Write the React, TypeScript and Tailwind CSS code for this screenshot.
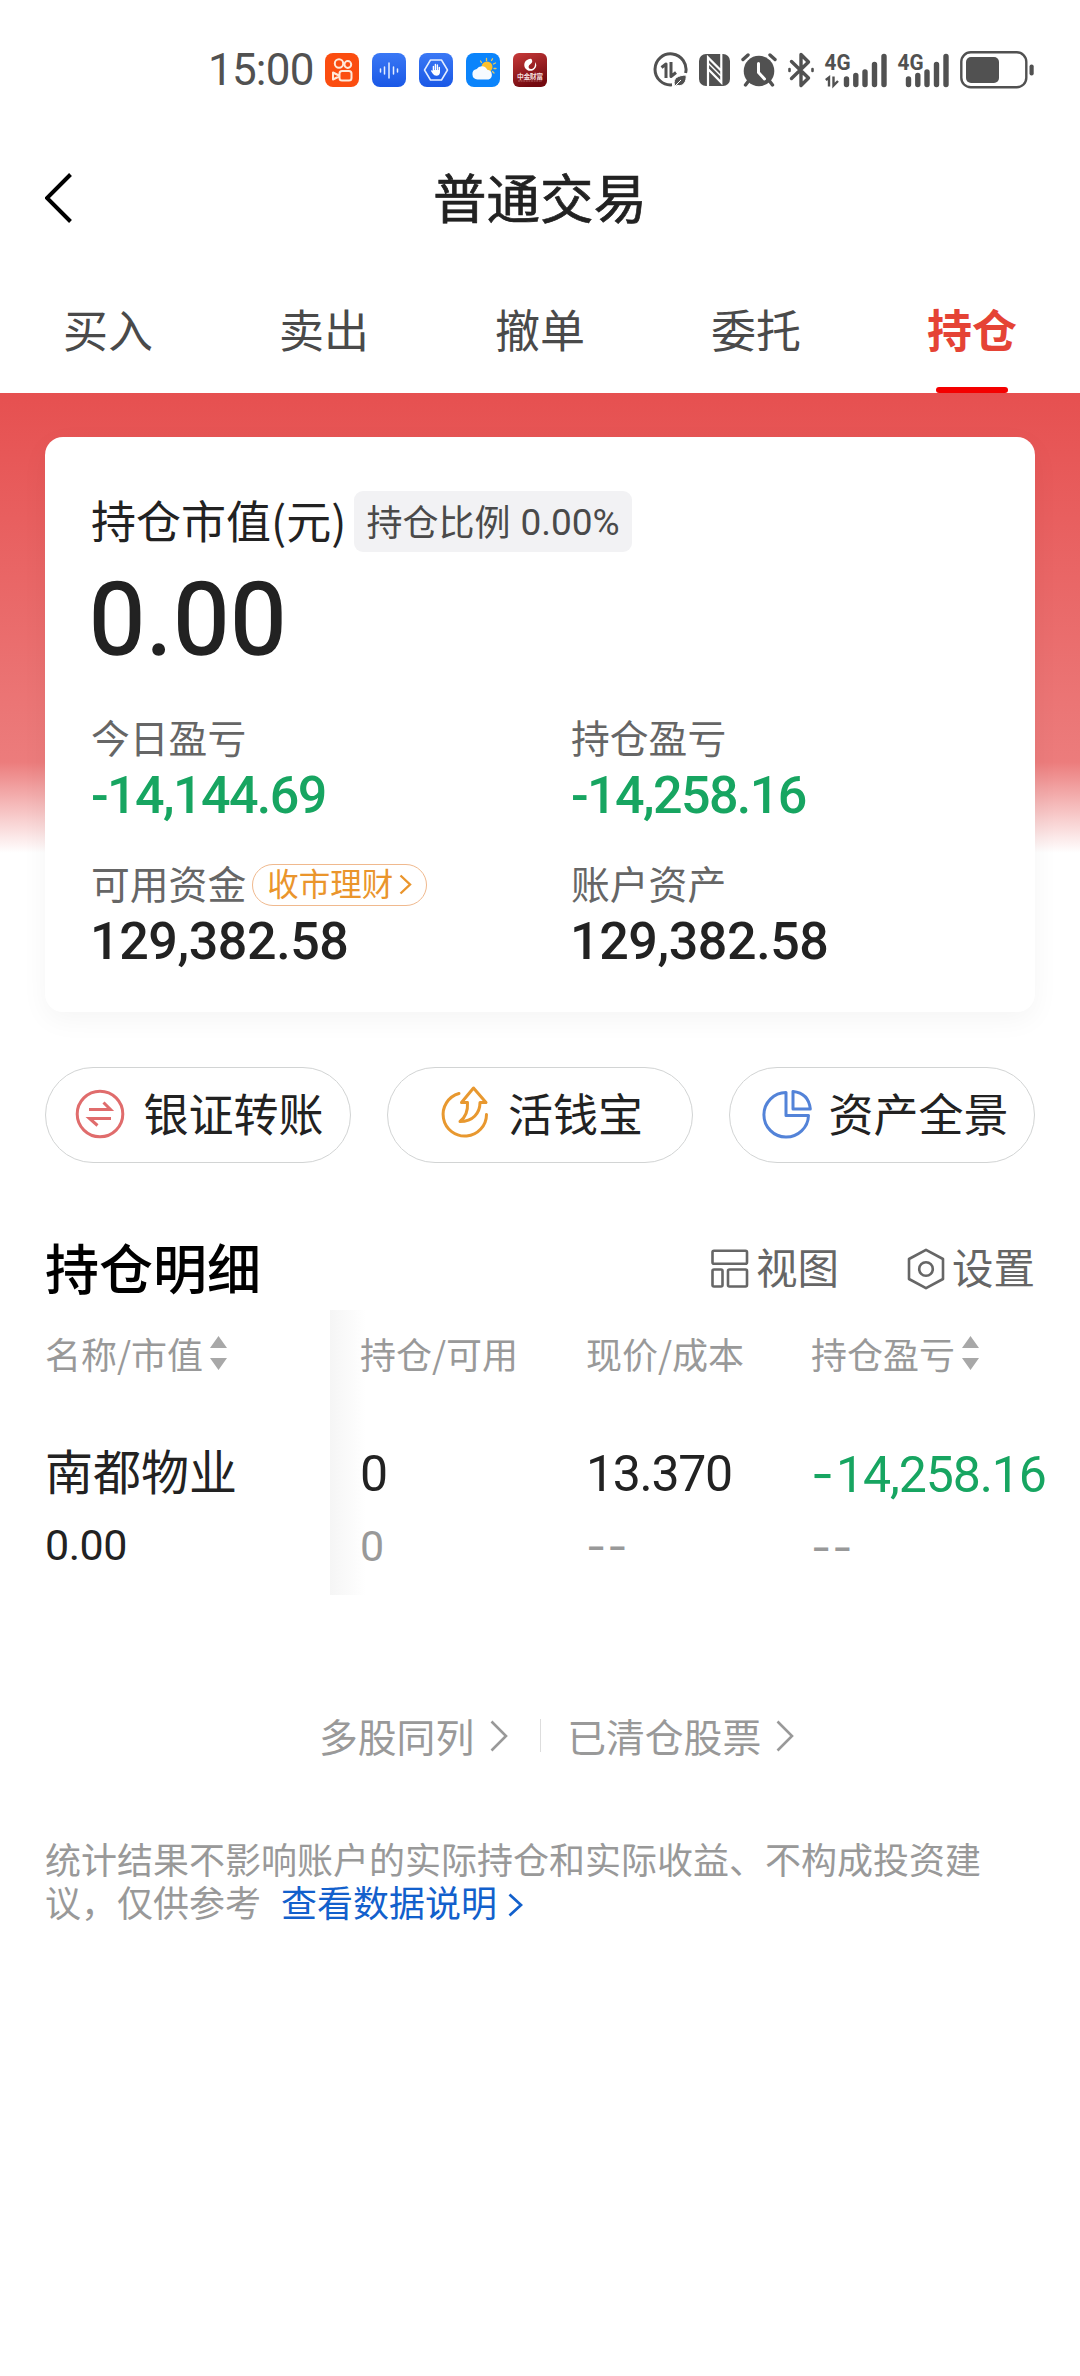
import React from 'react';

const CJK = "font-['Noto_Sans_CJK_SC',sans-serif]";
const NUM = "font-['Roboto','Noto_Sans_CJK_SC',sans-serif]";

function KuaiIcon() {
  return (
    <svg width="34" height="34" viewBox="0 0 34 34" fill="none">
      <rect width="34" height="34" rx="8" fill="#fb4d10" />
      <g stroke="#ffe9da" strokeWidth="2">
        <circle cx="14" cy="10.5" r="4.2" />
        <circle cx="22.8" cy="11.5" r="3.4" />
        <rect x="14.5" y="18" width="12" height="9.5" rx="2.5" />
        <path d="M14 22.5 8 19.5v7l6-3" strokeLinejoin="round" />
      </g>
    </svg>
  );
}

function WaveIcon() {
  return (
    <svg width="34" height="34" viewBox="0 0 34 34" fill="none">
      <defs>
        <linearGradient id="wave" x1="0" y1="0" x2="0" y2="1">
          <stop stopColor="#3a78f5" />
          <stop offset="1" stopColor="#1a58e6" />
        </linearGradient>
      </defs>
      <rect width="34" height="34" rx="8" fill="url(#wave)" />
      <path d="M8.5 16v3M12.5 14v7M17 10v15M21.500 14v7M25.500 16v3" stroke="#e4eeff" strokeWidth="1.500" strokeLinecap="round" />
    </svg>
  );
}

function HandIcon() {
  return (
    <svg width="34" height="34" viewBox="0 0 34 34" fill="none">
      <defs>
        <linearGradient id="hand" x1="0" y1="0" x2="0" y2="1">
          <stop stopColor="#3a78f5" />
          <stop offset="1" stopColor="#1a58e6" />
        </linearGradient>
      </defs>
      <rect width="34" height="34" rx="8" fill="url(#hand)" />
      <path d="M11.500 7h11L28.500 17l-6 10h-11L5.500 17z" stroke="#e4eeff" strokeWidth="1.500" strokeLinejoin="round" />
      <path d="M14.400 17.500v-4M16.400 16.500v-5M18.400 16.500v-4.500M20.300 17.500v-3" stroke="#fff" strokeWidth="1.400" strokeLinecap="round" />
      <path d="M13.700 17h7.300v2.500q-.5 3.300-3.600 3.300-2.300 0-3.600-2l-2-3q.6-1 1.900.2z" fill="#fff" />
    </svg>
  );
}

function WeatherIcon() {
  return (
    <svg width="34" height="34" viewBox="0 0 34 34" fill="none">
      <rect width="34" height="34" rx="8" fill="#0b84fb" />
      <path d="M20.500 5.500v2M25.500 7.500l1-1.700M14.500 8l1 1.500M27.500 11l2-1M28 15.500h2M26.500 18.500l1.500 1.500" stroke="#e8c860" strokeWidth="1.300" strokeLinecap="round" />
      <circle cx="21" cy="14" r="5.500" fill="#fcc02c" />
      <path d="M11.500 26.500a5.300 5.300 0 0 1-.8-10.500 6 6 0 0 1 10.600.8 5 5 0 0 1 1.200 9.700z" fill="#f6faff" />
    </svg>
  );
}

function CiccIcon() {
  return (
    <svg width="34" height="34" viewBox="0 0 34 34" fill="none">
      <defs>
        <linearGradient id="cicc" x1="0" y1="0" x2=".4" y2="1">
          <stop stopColor="#c83a3a" />
          <stop offset="1" stopColor="#740a10" />
        </linearGradient>
      </defs>
      <rect width="34" height="34" rx="6" fill="url(#cicc)" />
      <path d="M18.500 6a6 6 0 1 0 2.800 10.300 5.500 5.500 0 0 0 .7-7.300q.6 5-2.500 6.800-3.600 1-4-1.800.1-2 2.300-3.200Q20.300 9 18.500 6z" fill="#fff" />
      <text x="4" y="26" fontSize="6.800" fontWeight="700" fill="#f3dcdc" textLength="26" className="font-['Noto_Sans_CJK_SC',sans-serif]">中金财富</text>
      <path d="M5 28h24" stroke="#c98a8a" strokeWidth=".7" strokeDasharray="2 .6" />
    </svg>
  );
}

function DataSaverIcon() {
  return (
    <svg width="36" height="36" viewBox="0 0 36 36" fill="none" stroke="#515151">
      <path d="M33.600 21A15.500 15.500 0 1 0 20 32.800" strokeWidth="3" />
      <path d="M9.500 15.500 14 12v14M19 10v14.500l5-4" strokeWidth="3" strokeLinejoin="round" />
      <path d="M22.500 33.500c-2-8 4-10 11.500-10.500 1 7-3 12-9 10.300M23 34l6-6" fill="#515151" stroke="#fff" strokeWidth="1" />
    </svg>
  );
}

function NfcIcon() {
  return (
    <svg width="31" height="32" viewBox="0 0 31 32" fill="none">
      <rect width="31" height="32" rx="7" fill="#515151" />
      <path d="M9 32V3.500L22 16.500M22.300 0v28.500L9.500 15.500" stroke="#fff" strokeWidth="2.200" />
      <path d="M9.500 9.500 22 22" stroke="#fff" strokeWidth="1.400" />
    </svg>
  );
}

function AlarmIcon() {
  return (
    <svg width="36" height="34" viewBox="0 0 36 34" fill="none" stroke="#515151" strokeLinecap="round">
      <circle cx="18" cy="18" r="15.300" fill="#515151" stroke="none" />
      <path d="M2 6.500 7 2M34 6.500 29 2M7.500 28 4.500 32M28.500 28l3 4" strokeWidth="3.400" />
      <path d="M17.500 10.500v9l6 6.500" stroke="#fff" strokeWidth="3" />
    </svg>
  );
}

function BluetoothIcon() {
  return (
    <svg width="26" height="36" viewBox="0 0 26 36" fill="none" stroke="#515151" strokeWidth="3.400" strokeLinejoin="round" strokeLinecap="round">
      <path d="M3.500 9.500 20.500 26l-7.500 7.500V2.500L20.500 10 3.500 26.500" />
      <path d="M1.500 17v2M24.500 17v2" strokeWidth="2.600" />
    </svg>
  );
}

function Signal({ data }: { data?: boolean }) {
  const shift = data ? 0 : -11;
  return (
    <svg width={data ? 62 : 51} height="36" viewBox={data ? '0 0 62 36' : '0 0 51 36'} fill="none" className="overflow-visible">
      <text x="-.5" y="17.500" fontSize="22" fontWeight="700" fill="#515151" textLength="26" lengthAdjust="spacingAndGlyphs" className="font-['Roboto',sans-serif]">4G</text>
      {data && <path d="M.8 28 4 25.500v9M8.500 24.500v9l4.500-4.500" stroke="#515151" strokeWidth="2.400" />}
      <g stroke="#515151" strokeWidth="5.400" strokeLinecap="round" transform={`translate(${shift} 0)`}>
        <path d="M21.500 27v5.500M30.800 23.500v9M40 20v12.500M49.500 12.500v20M59 4.500v28" />
      </g>
    </svg>
  );
}

function Battery() {
  return (
    <svg width="74" height="38" viewBox="0 0 74 38" fill="none">
      <rect x="1.300" y="1.300" width="65" height="35" rx="9.500" stroke="#515151" strokeWidth="2.400" />
      <rect x="6" y="6" width="33" height="26" rx="5" fill="#515151" />
      <rect x="69.500" y="13.500" width="4.200" height="11" rx="2" fill="#515151" />
    </svg>
  );
}

function Chevron({ w, h, className, stroke }: { w: number; h: number; className?: string; stroke: number }) {
  return (
    <svg width={w} height={h} viewBox={`0 0 ${w} ${h}`} fill="none" stroke="currentColor" strokeWidth={stroke} className={className}>
      <path d={`M1.500 1.500 L${w - 2} ${h / 2} L1.500 ${h - 1.500}`} />
    </svg>
  );
}

function SortIcon() {
  return (
    <svg width="17" height="34" viewBox="0 0 17 34" fill="#a8a8a8">
      <path d="M8.500 0 17 12H0zM8.500 34 17 22H0z" />
    </svg>
  );
}

function TransferIcon() {
  return (
    <svg width="50" height="50" viewBox="0 0 50 50" fill="none" stroke="#e06c6c" strokeWidth="3" className="mb-[2px]">
      <circle cx="25" cy="25" r="22.800" />
      <path d="M14 20.500h21.500L28.500 13.500M36 29.500H14.500L22.500 36.500" />
    </svg>
  );
}

function CashIcon() {
  return (
    <svg width="50" height="54" viewBox="0 0 50 54" fill="none" stroke="#e8982f" strokeWidth="3" strokeLinejoin="round" strokeLinecap="round" className="mb-[7px]">
      <path d="M19 8.500A21.700 21.700 0 1 0 46.500 29.500" />
      <path d="M33.500 3 46 17.500h-6C40 28 33 36.500 20 36.500c6.500-5 8-11 7.500-19h-6z" />
    </svg>
  );
}

function PieIcon() {
  return (
    <svg width="50" height="50" viewBox="0 0 50 50" fill="none" stroke="#5383d8" strokeWidth="3" strokeLinejoin="round" className="-mr-[2px] mb-[2px] ml-[2px]">
      <path d="M24 3.500A22.300 22.300 0 1 0 46.500 26.500H24z" />
      <path d="M31 2.500v17.500H48.300Q46.500 4 31 2.500z" />
    </svg>
  );
}

function ViewIcon() {
  return (
    <svg width="38" height="40" viewBox="0 0 38 40" fill="none" stroke="#666" strokeWidth="2.600" className="mt-[3px]">
      <rect x="1.500" y="1.800" width="34.500" height="13" rx="1.500" />
      <rect x="1.500" y="20.500" width="10" height="17" rx="1.500" />
      <rect x="17" y="20.500" width="19" height="17" rx="1.500" />
    </svg>
  );
}

function SettingIcon() {
  return (
    <svg width="38" height="42" viewBox="0 0 38 42" fill="none" stroke="#666" strokeWidth="2.600" strokeLinejoin="round" className="mt-[3px]">
      <path d="M19 1.800 36 11v20L19 40.200 2 31V11z" />
      <circle cx="19" cy="21" r="6.800" />
    </svg>
  );
}

const tabs = ['买入', '卖出', '撤单', '委托', '持仓'];

const shortcuts = [
  { label: '银证转账', icon: <TransferIcon />, pad: 'pl-[3px]' },
  { label: '活钱宝', icon: <CashIcon />, pad: 'pl-[3px]' },
  { label: '资产全景', icon: <PieIcon />, pad: 'pl-[5px]' },
];

function Stat({ label, value, tone, children }: { label: string; value: string; tone: string; children?: React.ReactNode }) {
  return (
    <div>
      <div className="flex h-[39px] items-center text-[38.800px] leading-none text-[#666]">
        {label}
        {children}
      </div>
      <div className={`mt-[14px] -mb-px text-[52px] leading-none font-medium whitespace-nowrap ${NUM} ${tone}`}>{value}</div>
    </div>
  );
}

function Dashes() {
  return <div className="mt-[25px] font-['Inter',sans-serif] text-[44px] tracking-[1px]">--</div>;
}

export default function App() {
  return (
    <div className={`flex h-[2376px] w-[1080px] flex-col overflow-hidden bg-white text-[#222] ${CJK}`}>
      <div className="flex h-[140px] shrink-0 items-center pr-[46px] pl-[208px]">
        <span className={`w-[117px] text-[44px] leading-none tracking-[-0.8px] text-[#515151] ${NUM}`}>15:00</span>
        <div className="flex gap-[13px]">
          <KuaiIcon />
          <WaveIcon />
          <HandIcon />
          <WeatherIcon />
          <CiccIcon />
        </div>
        <div className="ml-auto flex items-center gap-[11px]">
          <DataSaverIcon />
          <NfcIcon />
          <AlarmIcon />
          <BluetoothIcon />
          <Signal data />
          <Signal />
          <Battery />
        </div>
      </div>

      <header className="grid h-[112px] shrink-0 grid-cols-[120px_1fr_120px] items-center">
        <Chevron w={27} h={50} stroke={4} className="ml-[45px] mt-1 -scale-x-100 text-black" />
        <h1 className="text-center text-[53.500px] leading-none font-normal [-webkit-text-stroke:0.7px_currentColor]">普通交易</h1>
      </header>

      <nav className="grid h-[141px] shrink-0 grid-cols-5">
        {tabs.map((t) => {
          const active = t === '持仓';
          return (
            <div key={t} className="flex flex-col items-center justify-between pt-[54px] text-[45px] leading-none">
              <span className={active ? 'font-bold text-[#e54335]' : 'text-[#4a4a4a]'}>{t}</span>
              {active && <span className="h-[6px] w-[72px] rounded-[3px] bg-[#f40000]" />}
            </div>
          );
        })}
      </nav>

      <section className="shrink-0 bg-[linear-gradient(#e65050_0px,#ec7c7c_369px,#ffffff_460px)] bg-no-repeat px-[45px] pt-[44px]">
        <div className="h-[575px] rounded-[18px] bg-white px-[46px] pt-[54px] shadow-[0_8px_28px_rgba(0,0,0,0.045)]">
          <div className="flex h-[61px] items-center">
            <span className="pb-[5px] text-[45px] leading-none">持仓市值(元)</span>
            <span className="ml-[8px] flex h-[61px] items-center rounded-[9px] bg-[#f2f2f4] px-[12px] text-[36px] leading-none text-[#4a4a4a]">
              <span className="pb-[3px]">持仓比例</span>
              <span className={`ml-[10px] pt-[2px] text-[37px] ${NUM}`}>0.00%</span>
            </span>
          </div>
          <div className={`mt-[18px] -ml-[2px] text-[100px] leading-none tracking-[0.8px] [-webkit-text-stroke:1.6px_currentColor] ${NUM}`}>0.00</div>
          <div className="mt-[47px] grid grid-cols-[480px_1fr] gap-y-[42px]">
            <Stat label="今日盈亏" value="-14,144.69" tone="text-[#17a561] tracking-[-1.600px]" />
            <Stat label="持仓盈亏" value="-14,258.16" tone="text-[#17a561] tracking-[-1.600px]" />
            <Stat label="可用资金" value="129,382.58" tone="-ml-px text-[#222] tracking-[-0.4px]">
              <span className="mt-[4px] ml-[6px] flex h-[42px] items-center rounded-full border border-[#f0b98e] px-[14px] text-[31.500px] text-[#ea952c]">
                <span className="pb-[3px]">收市理财</span>
                <Chevron w={13} h={21} stroke={2.4} className="ml-[6px]" />
              </span>
            </Stat>
            <Stat label="账户资产" value="129,382.58" tone="-ml-px text-[#222] tracking-[-0.4px]" />
          </div>
        </div>
      </section>

      <div className="mt-[55px] flex shrink-0 gap-[36px] px-[45px]">
        {shortcuts.map((s) => (
          <button key={s.label} className={`flex h-[96px] w-[306px] items-center justify-center gap-[18px] rounded-full border border-[#d2d4d4] text-[45px] leading-none ${s.pad}`}>
            {s.icon}
            <span className="pb-[5px] whitespace-nowrap">{s.label}</span>
          </button>
        ))}
      </div>

      <div className="mt-[77px] flex h-[54px] shrink-0 items-center justify-between px-[45px]">
        <h2 className="text-[54px] leading-none font-medium text-black">持仓明细</h2>
        <div className="flex gap-[68px] text-[41.500px] leading-none text-[#666]">
          <span className="flex items-center gap-[7px]"><ViewIcon />视图</span>
          <span className="flex items-center gap-[7px]"><SettingIcon />设置</span>
        </div>
      </div>

      <div className="mt-[16px] flex h-[285px] shrink-0 pl-[45px] leading-none">
        <div className="w-[285px] pt-[25px]">
          <div className="flex h-[36px] items-center gap-[7px] text-[36px] text-[#999]">名称/市值<SortIcon /></div>
          <div className="mt-[74px] text-[48px]">南都物业</div>
          <div className={`mt-[31px] text-[43px] tracking-[-0.5px] ${NUM}`}>0.00</div>
        </div>
        <div className="grid flex-1 grid-cols-[226px_225px_1fr] bg-[linear-gradient(90deg,#f5f5f5_0px,#ffffff_36px)] pt-[25px] pl-[30px] text-[#999]">
          <div>
            <div className="h-[36px] text-[36px]">持仓/可用</div>
            <div className={`mt-[78px] text-[50px] text-[#222] ${NUM}`}>0</div>
            <div className={`mt-[26px] text-[43px] ${NUM}`}>0</div>
          </div>
          <div>
            <div className="h-[36px] text-[36px]">现价/成本</div>
            <div className={`mt-[78px] text-[50px] tracking-[-1.300px] text-[#222] ${NUM}`}>13.370</div>
            <Dashes />
          </div>
          <div>
            <div className="flex h-[36px] items-center gap-[7px] text-[36px]">持仓盈亏<SortIcon /></div>
            <div className={`mt-[78px] text-[50px] tracking-[-1.100px] whitespace-nowrap text-[#17a561] ${NUM}`}><span className="mr-[3px] font-['Inter',sans-serif]">-</span>14,258.16</div>
            <Dashes />
          </div>
        </div>
      </div>

      <div className="mt-[121px] flex h-[39px] shrink-0 items-center pl-[319px] text-[38.800px] leading-none text-[#999]">
        <span>多股同列</span>
        <Chevron w={18} h={32} stroke={2.6} className="ml-[16px]" />
        <span className="ml-[32px] h-[33px] w-px bg-[#ddd]" />
        <span className="ml-[26px]">已清仓股票</span>
        <Chevron w={18} h={32} stroke={2.6} className="ml-[15px]" />
      </div>

      <p className="mt-[82px] shrink-0 px-[45px] text-[36px] leading-[43px] text-[#999]">
        统计结果不影响账户的实际持仓和实际收益、不构成投资建
        <br />
        议，仅供参考
        <span className="ml-[20px] text-[#1260cc]">
          查看数据说明
          <Chevron w={15} h={24} stroke={2.8} className="ml-[11px] inline-block align-[0px]" />
        </span>
      </p>
    </div>
  );
}
